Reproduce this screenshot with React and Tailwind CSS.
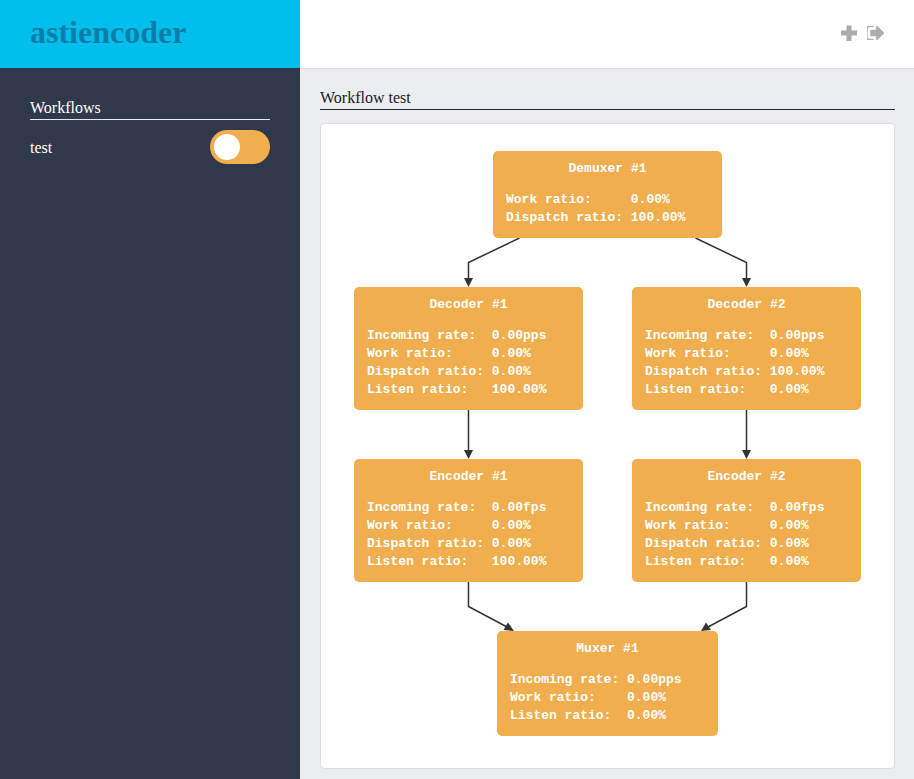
import React from "react";

const serif = "font-['Liberation_Serif','Times_New_Roman',serif]";

function Node({ pos, title, lines }) {
  return (
    <div className={`absolute ${pos} rounded-[5px] bg-[#f0ae4f] pt-[9px] pb-[11px] pl-[13px] font-['Liberation_Mono','Courier_New',monospace] text-[13px] leading-[18px] font-bold text-white`}>
      <div className="mb-[13px] pr-[13px] text-center">{title}</div>
      {lines.map((l) => (
        <div key={l} className="whitespace-pre">{l}</div>
      ))}
    </div>
  );
}

function Arrow({ d, tip }) {
  return (
    <g>
      <path d={d} fill="none" stroke="#333333" strokeWidth="1.500" />
      <polygon points={tip} fill="#333333" />
    </g>
  );
}

export default function App() {
  return (
    <div className={`flex min-h-[779px] w-full bg-[#ebedf0] ${serif}`}>
      <aside className="flex w-[300px] shrink-0 flex-col bg-[#2f394b] text-white">
        <div className="flex h-[68px] items-center bg-[#00bfec] pb-[5px] pl-[30px]">
          <span className="text-[32px] leading-none font-bold text-[#0b7ea8]">astiencoder</span>
        </div>
        <div className="px-[30px] pt-[30px]">
          <div className="h-[22px] border-b border-[#e8eaee] text-base leading-[19px]">Workflows</div>
          <div className="mt-[10px] flex h-[34px] items-center justify-between">
            <span className="pt-[2px] text-base">test</span>
            <div className="flex h-[34px] w-[60px] items-center rounded-[17px] bg-[#f0ae4f] pl-1">
              <div className="h-[26px] w-[26px] rounded-full bg-white" />
            </div>
          </div>
        </div>
      </aside>
      <main className="flex min-w-0 flex-1 flex-col">
        <header className="flex h-[69px] items-center justify-end gap-[10px] border-b border-[#dcdee2] bg-white pr-[30px] pb-[3px]">
          <svg width="16" height="16" viewBox="0 0 16 16" aria-hidden="true">
            <path d="M5.500 .5h5v5H16v5H10.500V16h-5V10.500H0v-5H5.500z" fill="#a9adb0" />
          </svg>
          <svg width="17" height="14" viewBox="160 288 1472 1216" aria-hidden="true">
            <path fill="#a9adb0" stroke="#a9adb0" strokeWidth="30" d="M704 1440q0 4 1 20t.5 26.500-3 23.500-10 19.500-20.500 6.500h-320q-119 0-203.500-84.500t-84.500-203.500v-704q0-119 84.500-203.500t203.500-84.500h320q13 0 22.500 9.500t9.500 22.500q0 4 1 20t.5 26.500-3 23.500-10 19.500-20.500 6.500h-320q-66 0-113 47t-47 113v704q0 66 47 113t113 47h312l11.500 1 11.500 3 8 5.500 7 9 2 13.500zm928-544q0 26-19 45l-544 544q-19 19-45 19t-45-19-19-45v-288h-448q-26 0-45-19t-19-45v-384q0-26 19-45t45-19h448v-288q0-26 19-45t45-19 45 19l544 544q19 19 19 45z" />
          </svg>
        </header>
        <div className="pr-[19px] pl-5 pt-5">
          <div className="h-[21px] border-b border-[#222b3a] text-base leading-[18px] text-[#222]">Workflow test</div>
          <div className="relative mt-[13px] h-[646px] rounded border border-[#dcdee2] bg-white">
            <svg className="absolute inset-0 h-full w-full" viewBox="321 124 573 644" aria-hidden="true">
              <Arrow d="M519.500 238 L468.500 262.500 L468.500 279" tip="464,278 473,278 468.500,287" />
              <Arrow d="M695.500 238 L746.500 262.500 L746.500 279" tip="742,278 751,278 746.500,287" />
              <Arrow d="M468.500 410 L468.500 451" tip="464,450 473,450 468.500,459" />
              <Arrow d="M746.500 410 L746.500 451" tip="742,450 751,450 746.500,459" />
              <Arrow d="M468.500 582 L468.500 606.500 L507 627" tip="508,622.500 503.500,630 514,631" />
              <Arrow d="M746.500 582 L746.500 606.500 L708 627" tip="706,622.500 711,630 701,631" />
            </svg>
            <Node pos="left-[172px] top-[27px] w-[229px]" title="Demuxer #1" lines={["Work ratio:     0.00%", "Dispatch ratio: 100.00%"]} />
            <Node pos="left-[33px] top-[163px] w-[229px]" title="Decoder #1" lines={["Incoming rate:  0.00pps", "Work ratio:     0.00%", "Dispatch ratio: 0.00%", "Listen ratio:   100.00%"]} />
            <Node pos="left-[311px] top-[163px] w-[229px]" title="Decoder #2" lines={["Incoming rate:  0.00pps", "Work ratio:     0.00%", "Dispatch ratio: 100.00%", "Listen ratio:   0.00%"]} />
            <Node pos="left-[33px] top-[335px] w-[229px]" title="Encoder #1" lines={["Incoming rate:  0.00fps", "Work ratio:     0.00%", "Dispatch ratio: 0.00%", "Listen ratio:   100.00%"]} />
            <Node pos="left-[311px] top-[335px] w-[229px]" title="Encoder #2" lines={["Incoming rate:  0.00fps", "Work ratio:     0.00%", "Dispatch ratio: 0.00%", "Listen ratio:   0.00%"]} />
            <Node pos="left-[176px] top-[507px] w-[221px]" title="Muxer #1" lines={["Incoming rate: 0.00pps", "Work ratio:    0.00%", "Listen ratio:  0.00%"]} />
          </div>
        </div>
      </main>
    </div>
  );
}
